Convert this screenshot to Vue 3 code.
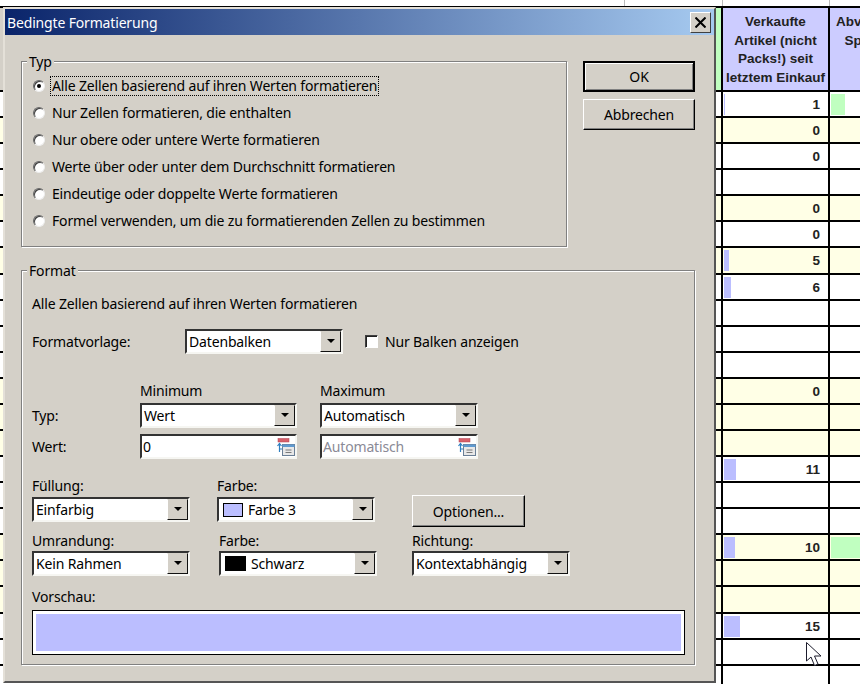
<template>
  <div class="page">
    <!-- Excel sheet behind the dialog -->
    <div class="sheet">
      <div class="topStrip">
        <span class="tick t1"></span>
        <span class="tick t2"></span>
        <span class="tick t3"></span>
      </div>
      <div class="headRow">
        <div class="gutter green"></div>
        <div class="head">Verkaufte<br />Artikel (nicht<br />Packs!) seit<br />letztem Einkauf</div>
        <div class="head second">Abverkauf<br />Spanne</div>
      </div>
      <div v-for="(r, i) in rows" :key="i" class="row" :class="{ yellow: r.y }">
        <div class="gutter"></div>
        <div class="cell">
          <span v-if="r.bar" class="bar" :style="{ width: r.bar + 'px' }"></span>
          {{ r.v }}
        </div>
        <div class="cell second">
          <span v-if="r.green" class="bar greenBar" :style="{ width: r.green + 'px' }"></span>
        </div>
      </div>
    </div>

    <svg class="cursor" width="18" height="26" viewBox="0 0 18 26">
      <path d="M1.5 1.5V20L6 16L9.5 24.5L13 23L9.5 15H16Z" fill="#fff" stroke="#1c1c2c" stroke-width="1" />
    </svg>

    <!-- Dialog -->
    <div class="dialog">
      <div class="titleBar">
        <span>Bedingte Formatierung</span>
        <button class="close" type="button">
          <svg width="11" height="11" viewBox="0 0 11 11">
            <path d="M0.5 0.5L10.5 10.5M10.5 0.5L0.5 10.5" stroke="#000" stroke-width="2" />
          </svg>
        </button>
      </div>

      <div class="topArea">
        <div class="group typ">
          <span class="legend">Typ</span>
          <div v-for="(t, i) in types" :key="t" class="radioRow">
            <span class="radio" :class="{ on: i === 0 }"></span>
            <span class="radioText" :class="{ focus: i === 0 }">{{ t }}</span>
          </div>
        </div>
        <div class="actions">
          <button class="btn default" type="button">OK</button>
          <button class="btn" type="button">Abbrechen</button>
        </div>
      </div>

      <div class="group format">
        <span class="legend">Format</span>
        <div class="line desc">Alle Zellen basierend auf ihren Werten formatieren</div>

        <div class="flexRow styleRow">
          <label class="lblStyle">Formatvorlage:</label>
          <div class="combo w158"><span class="val">Datenbalken</span><span class="drop"></span></div>
          <span class="check"></span>
          <span>Nur Balken anzeigen</span>
        </div>

        <div class="flexRow minmaxHead">
          <span class="colMin">Minimum</span>
          <span>Maximum</span>
        </div>
        <div class="flexRow typRow">
          <label class="lblTyp">Typ:</label>
          <div class="combo w157"><span class="val">Wert</span><span class="drop"></span></div>
          <div class="combo w158 gap23"><span class="val">Automatisch</span><span class="drop"></span></div>
        </div>
        <div class="flexRow wertRow">
          <label class="lblTyp">Wert:</label>
          <div class="combo w157"><span class="val num">0</span><RefIcon /></div>
          <div class="combo w158 gap23"><span class="val num muted">Automatisch</span><RefIcon /></div>
        </div>

        <div class="flexRow fillRow">
          <div class="col">
            <label>Füllung:</label>
            <div class="combo w158"><span class="val">Einfarbig</span><span class="drop"></span></div>
          </div>
          <div class="col m27">
            <label>Farbe:</label>
            <div class="combo w158">
              <span class="swatch blue"></span><span class="val">Farbe 3</span><span class="drop"></span>
            </div>
          </div>
          <button class="btn options" type="button">Optionen...</button>
        </div>

        <div class="flexRow borderRow">
          <div class="col">
            <label>Umrandung:</label>
            <div class="combo w158"><span class="val">Kein Rahmen</span><span class="drop"></span></div>
          </div>
          <div class="col m29">
            <label>Farbe:</label>
            <div class="combo w158">
              <span class="swatch black"></span><span class="val">Schwarz</span><span class="drop"></span>
            </div>
          </div>
          <div class="col m35">
            <label>Richtung:</label>
            <div class="combo w158"><span class="val">Kontextabhängig</span><span class="drop"></span></div>
          </div>
        </div>

        <label class="previewLabel">Vorschau:</label>
        <div class="preview"><div class="previewFill"></div></div>
      </div>
    </div>
  </div>
</template>

<script setup>
import { h } from "vue";

const types = [
  "Alle Zellen basierend auf ihren Werten formatieren",
  "Nur Zellen formatieren, die enthalten",
  "Nur obere oder untere Werte formatieren",
  "Werte über oder unter dem Durchschnitt formatieren",
  "Eindeutige oder doppelte Werte formatieren",
  "Formel verwenden, um die zu formatierenden Zellen zu bestimmen",
];

const rows = [
  { v: "1", bar: 1, green: 14 },
  { v: "0", y: 1 },
  { v: "0" },
  { v: "" },
  { v: "0", y: 1 },
  { v: "0" },
  { v: "5", y: 1, bar: 5 },
  { v: "6", bar: 7 },
  { v: "" },
  { v: "" },
  { v: "" },
  { v: "0", y: 1 },
  { v: "", y: 1 },
  { v: "", y: 1 },
  { v: "11", bar: 12 },
  { v: "" },
  { v: "" },
  { v: "10", y: 1, bar: 11, green: 40 },
  { v: "", y: 1 },
  { v: "", y: 1 },
  { v: "15", bar: 16 },
  { v: "" },
  { v: "" },
];

// small range-picker icon at the end of the value fields
const RefIcon = () =>
  h("svg", { class: "refIcon", width: 18, height: 18, viewBox: "0 0 18 18" }, [
    h("rect", { x: 1, y: 0.5, width: 11, height: 3.5, fill: "#d8606a", stroke: "#b04050", "stroke-width": 0.5 }),
    h("path", { d: "M2.5 14V6M0.5 8L2.5 5.5L4.5 8M2.5 11H5", fill: "none", stroke: "#2f7fc0", "stroke-width": 1.2 }),
    h("rect", { x: 5.5, y: 6.5, width: 12, height: 11, fill: "#e8e8e8", stroke: "#6a7f96" }),
    h("rect", { x: 5.5, y: 6.5, width: 12, height: 2.5, fill: "#5f9ad0" }),
    h("path", { d: "M8.5 12H14.5M8.5 14.5H14.5", stroke: "#7a7a7a" }),
  ]);
</script>

<style>
html,
body {
  margin: 0;
  background: #fff;
}
</style>

<style scoped>
.page {
  position: relative;
  width: 860px;
  height: 684px;
  overflow: hidden;
  font-family: "Noto Sans", sans-serif;
  font-size: 14px;
  letter-spacing: -0.16px;
  color: #000;
}

/* Sheet */
.sheet {
  font-family: "Liberation Sans", Arial, sans-serif;
  font-weight: bold;
  font-size: 13.5px;
  letter-spacing: 0;
  color: #222;
}
.topStrip {
  position: relative;
  height: 6px;
  border-bottom: 2px solid #000;
}
.tick {
  position: absolute;
  top: 0;
  width: 1px;
  height: 6px;
  background: #bbb;
}
.t1 { left: 624px; }
.t2 { left: 722px; }
.t3 { left: 829px; }

.headRow,
.row {
  display: flex;
  width: 990px;
  box-sizing: border-box;
  border-bottom: 2px solid #000;
}
.headRow {
  height: 84px;
}
.row {
  height: 26.09px;
}
.yellow {
  background: #ffffe6;
}
.gutter {
  width: 721px;
  flex: none;
}
.green {
  background: linear-gradient(90deg, #d4d0c8 716px, #c0ffc0 716px);
}
.head {
  width: 107px;
  flex: none;
  box-sizing: border-box;
  border-left: 2px solid #000;
  background: #ccccff;
  padding-top: 5px;
  text-align: center;
  line-height: 18.7px;
  white-space: nowrap;
}
.head.second {
  width: 80px;
}
.cell {
  position: relative;
  width: 107px;
  flex: none;
  box-sizing: border-box;
  border-left: 2px solid #000;
  padding-right: 8px;
  text-align: right;
  line-height: 25px;
}
.cell.second {
  width: 80px;
}
.bar {
  position: absolute;
  left: 1px;
  top: 2px;
  height: 21px;
  background: #bbbeff;
}
.greenBar {
  background: #c0ffc0;
}
.cursor {
  position: absolute;
  left: 805px;
  top: 641px;
}

/* Dialog */
.dialog {
  position: absolute;
  left: 3px;
  top: 7px;
  width: 713px;
  height: 676px;
  box-sizing: border-box;
  border: 2px solid;
  border-color: #e4e0d8 #555 #555 #e4e0d8;
  background: #d4d0c8;
}
.titleBar {
  height: 26px;
  display: flex;
  align-items: center;
  justify-content: space-between;
  padding: 0 3px 0 2px;
  background: linear-gradient(90deg, #0a246a, #a6caf0);
  color: #fff;
}
.close {
  width: 21px;
  height: 21px;
  padding: 0;
  display: flex;
  align-items: center;
  justify-content: center;
  background: #d4d0c8;
  border: 1px solid;
  border-color: #fff #404040 #404040 #fff;
}

.topArea {
  display: flex;
  gap: 16px;
  margin: 26px 0 23px 16px;
}
.group {
  position: relative;
  box-sizing: border-box;
  border: 1px solid #808080;
  box-shadow: 1px 1px 0 #fff, inset 1px 1px 0 #fff;
}
.legend {
  position: absolute;
  top: -9px;
  left: 5px;
  padding: 0 2px;
  background: #d4d0c8;
  line-height: 18px;
}
.typ {
  width: 546px;
  height: 186px;
  padding: 10px 0 0 11px;
}
.radioRow {
  display: flex;
  align-items: center;
  gap: 6px;
  height: 27px;
}
.radio {
  position: relative;
  width: 12px;
  height: 12px;
  box-sizing: border-box;
  border-radius: 50%;
  background: #fff;
  border: 1px solid;
  border-color: #666 #eee #eee #666;
  box-shadow: inset 1px 1px 0 #404040;
}
.radio.on::after {
  content: "";
  position: absolute;
  left: 3px;
  top: 3px;
  width: 4px;
  height: 4px;
  border-radius: 50%;
  background: #000;
}
.radioText {
  line-height: 18px;
  padding: 0 1px;
}
.focus {
  outline: 1px dotted #000;
}
.actions {
  display: flex;
  flex-direction: column;
  gap: 7px;
}
.btn {
  width: 112px;
  height: 31px;
  padding: 0;
  font: inherit;
  letter-spacing: inherit;
  color: #000;
  background: #d4d0c8;
  border: 1px solid;
  border-color: #fff #000 #000 #fff;
  box-shadow: inset -1px -1px 0 #808080;
}
.default {
  border: 2px solid #000;
  box-shadow: inset 1px 1px 0 #fff, inset -1px -1px 0 #808080;
}

/* Format group */
.format {
  width: 674px;
  height: 395px;
  margin-left: 16px;
  padding: 24px 0 0 10px;
}
.line {
  height: 18px;
  line-height: 18px;
}
.flexRow {
  display: flex;
  align-items: center;
}
.styleRow {
  margin-top: 16px;
}
.lblStyle {
  width: 153px;
}
.check {
  width: 13px;
  height: 13px;
  box-sizing: border-box;
  margin: 0 7px 0 22px;
  background: #fff;
  border: 1px solid;
  border-color: #404040 #fff #fff #404040;
  box-shadow: inset 1px 1px 0 #222;
}
.minmaxHead {
  margin-top: 27px;
  height: 18px;
  padding-left: 108px;
}
.colMin {
  width: 180px;
}
.typRow {
  margin-top: 4px;
}
.wertRow {
  margin-top: 6px;
}
.lblTyp {
  width: 108px;
}
.gap23 {
  margin-left: 23px;
}
.combo {
  display: flex;
  align-items: center;
  height: 25px;
  box-sizing: border-box;
  border: 2px solid;
  border-color: #333 #f6f6f2 #f6f6f2 #333;
  background: #fff;
  overflow: hidden;
}
.w158 { width: 158px; }
.w157 { width: 157px; }
.val {
  flex: 1;
  padding-left: 2px;
  white-space: nowrap;
  line-height: 20px;
}
.num {
  padding-left: 1px;
}
.muted {
  color: #8a8a96;
}
.drop {
  position: relative;
  flex: none;
  width: 21px;
  height: 21px;
  box-sizing: border-box;
  background: #d4d0c8;
  border: 1px solid;
  border-color: #d4d0c8 #111 #111 #fff;
}
.drop::after {
  content: "";
  position: absolute;
  left: 6px;
  top: 7px;
  border-left: 4px solid transparent;
  border-right: 4px solid transparent;
  border-top: 4px solid #000;
}
.refIcon {
  flex: none;
}
.fillRow {
  margin-top: 18px;
  align-items: flex-start;
}
.borderRow {
  margin-top: 10px;
  align-items: flex-start;
}
.col {
  display: flex;
  flex-direction: column;
}
.col label {
  line-height: 17px;
  height: 19px;
}
.fillRow .col label {
  height: 20px;
}
.m27 { margin-left: 27px; }
.m29 { margin-left: 29px; }
.m35 { margin-left: 35px; }
.options {
  width: 113px;
  height: 32px;
  margin: 18px 0 -5px 37px;
}
.swatch {
  flex: none;
  box-sizing: border-box;
  border: 1px solid #000;
}
.blue {
  width: 20px;
  height: 14px;
  margin: 0 3px 0 4px;
  background: #bbbeff;
}
.black {
  width: 21px;
  height: 15px;
  margin: 0 3px 0 4px;
  background: #000;
}
.previewLabel {
  display: block;
  margin-top: 12px;
  height: 22px;
  line-height: 18px;
}
.preview {
  width: 653px;
  height: 45px;
  box-sizing: border-box;
  padding: 3px;
  background: #fff;
  border: 1px solid #000;
}
.previewFill {
  height: 100%;
  background: #bbbeff;
}
</style>
